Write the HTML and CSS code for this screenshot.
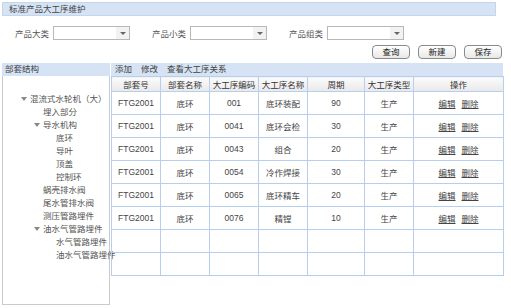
FILE: index.html
```html
<!DOCTYPE html>
<html lang="zh">
<head>
  <meta charset="UTF-8" />
  <title>标准产品大工序维护</title>
  <link rel="stylesheet" href="styles.css">
</head>
<body>
  <div class="title-bar">标准产品大工序维护</div>

  <div class="filters">
    <div class="field">
      <span class="field-label">产品大类</span>
      <div class="combo"><span class="combo-btn"><i class="caret"></i></span></div>
    </div>
    <div class="field">
      <span class="field-label">产品小类</span>
      <div class="combo"><span class="combo-btn"><i class="caret"></i></span></div>
    </div>
    <div class="field">
      <span class="field-label">产品组类</span>
      <div class="combo"><span class="combo-btn"><i class="caret"></i></span></div>
    </div>
  </div>

  <div class="actions">
    <a class="btn">查询</a>
    <a class="btn">新建</a>
    <a class="btn">保存</a>
  </div>

  <div class="main">
    <div class="tree-panel">
      <div class="panel-head">部套结构</div>
      <div class="tree-body">
        <div class="node lvl0"><i class="arrow"></i>混流式水轮机（大）</div>
        <div class="node lvl1">埋入部分</div>
        <div class="node lvl1"><i class="arrow"></i>导水机构</div>
        <div class="node lvl2">底环</div>
        <div class="node lvl2">导叶</div>
        <div class="node lvl2">顶盖</div>
        <div class="node lvl2">控制环</div>
        <div class="node lvl1">蜗壳排水阀</div>
        <div class="node lvl1">尾水管排水阀</div>
        <div class="node lvl1">测压管路埋件</div>
        <div class="node lvl1"><i class="arrow"></i>油水气管路埋件</div>
        <div class="node lvl2">水气管路埋件</div>
        <div class="node lvl2">油水气管路埋件</div>
      </div>
    </div>

    <div class="grid-panel">
      <div class="panel-head toolbar">
        <span>添加</span><span>修改</span><span>查看大工序关系</span>
      </div>
      <table class="grid">
        <colgroup>
          <col style="width:49px"><col style="width:49px"><col style="width:49px"><col style="width:49px">
          <col style="width:57px"><col style="width:49px"><col style="width:90px">
        </colgroup>
        <thead>
          <tr>
            <th>部套号</th><th>部套名称</th><th>大工序编码</th><th>大工序名称</th>
            <th>周期</th><th>大工序类型</th><th>操作</th>
          </tr>
        </thead>
        <tbody>
          <tr><td>FTG2001</td><td>底环</td><td>001</td><td>底环装配</td><td>90</td><td>生产</td><td><a>编辑</a><a>删除</a></td></tr>
          <tr><td>FTG2001</td><td>底环</td><td>0041</td><td>底环会检</td><td>30</td><td>生产</td><td><a>编辑</a><a>删除</a></td></tr>
          <tr><td>FTG2001</td><td>底环</td><td>0043</td><td>组合</td><td>20</td><td>生产</td><td><a>编辑</a><a>删除</a></td></tr>
          <tr><td>FTG2001</td><td>底环</td><td>0054</td><td>冷作焊接</td><td>30</td><td>生产</td><td><a>编辑</a><a>删除</a></td></tr>
          <tr><td>FTG2001</td><td>底环</td><td>0065</td><td>底环精车</td><td>20</td><td>生产</td><td><a>编辑</a><a>删除</a></td></tr>
          <tr><td>FTG2001</td><td>底环</td><td>0076</td><td>精镗</td><td>10</td><td>生产</td><td><a>编辑</a><a>删除</a></td></tr>
          <tr><td></td><td></td><td></td><td></td><td></td><td></td><td></td></tr>
          <tr><td></td><td></td><td></td><td></td><td></td><td></td><td></td></tr>
        </tbody>
      </table>
    </div>
  </div>
</body>
</html>
```

FILE: styles.css
```css
/* --- base --- */
body {
  margin: 0;
  background: #fff;
  color: #444;
  font-family: 'Liberation Sans', 'Noto Sans CJK SC', sans-serif;
  font-size: 8.5px;
  width: 511px;
  height: 308px;
  overflow: hidden;
}

/* --- title bar --- */
.title-bar {
  margin: 2px 0 0 2px;
  width: 486px;
  height: 12px;
  line-height: 12px;
  padding-left: 6px;
  background: #d5e3f4;
  border: 1px solid #c3d6ee;
  color: #444;
}

/* --- filters --- */
.filters {
  display: flex;
  gap: 22px;
  margin-top: 10px;
  padding-left: 15px;
  height: 14px;
}
.field {
  display: flex;
  align-items: center;
  gap: 4px;
}
.field-label {
  color: #555;
}
.combo {
  width: 75px;
  height: 12px;
  border: 1px solid #b8b8b8;
  background: #fff;
  display: flex;
  justify-content: flex-end;
}
.combo-btn {
  width: 13px;
  height: 12px;
  background: #f2f2f2;
  display: flex;
  align-items: center;
  justify-content: center;
}
.caret {
  width: 0;
  height: 0;
  border-left: 3px solid transparent;
  border-right: 3px solid transparent;
  border-top: 3px solid #666;
}

/* --- buttons --- */
.actions {
  display: flex;
  justify-content: flex-end;
  gap: 8px;
  margin-top: 5px;
  padding-right: 9px;
  height: 14px;
}
.btn {
  width: 36px;
  height: 12px;
  line-height: 12px;
  text-align: center;
  border: 1px solid #8a8a8a;
  border-radius: 4px;
  background: linear-gradient(#ffffff, #e8e8e8);
  color: #222;
  cursor: pointer;
}

/* --- main area --- */
.main {
  display: flex;
  margin-top: 4px;
  padding-left: 2px;
}
.panel-head {
  height: 13px;
  line-height: 13px;
  background: #d5e3f4;
  padding-left: 3px;
  color: #444;
}

.tree-panel {
  width: 108px;
}
.tree-body {
  height: 211px;
  padding-top: 17px;
  border: 1px solid #cacaca;
  border-top: none;
}
.node {
  height: 13px;
  line-height: 13px;
  white-space: nowrap;
  color: #555;
}
.node.lvl0 { padding-left: 27px; }
.node.lvl1 { padding-left: 40px; }
.node.lvl2 { padding-left: 53px; }
.arrow {
  display: inline-block;
  width: 0;
  height: 0;
  margin-left: -9px;
  margin-right: 3px;
  vertical-align: 1px;
  border-left: 3px solid transparent;
  border-right: 3px solid transparent;
  border-top: 4px solid #888;
}

/* --- grid --- */
.grid-panel {
  width: 392px;
  margin-left: 1px;
}
.toolbar {
  padding-left: 4px;
}
.toolbar span {
  margin-right: 9px;
}
.grid {
  width: 392px;
  border-collapse: collapse;
  table-layout: fixed;
}
.grid th, .grid td {
  border: 1px solid #b6cfee;
  text-align: center;
  padding: 0;
  white-space: nowrap;
  overflow: hidden;
}
.grid th {
  height: 14px;
  font-weight: normal;
  color: #333;
  background: linear-gradient(#fbfbfb, #e9e9e9);
}
.grid td {
  height: 22px;
  color: #444;
}
.grid td a {
  color: #444;
  text-decoration: underline;
  margin: 0 3px;
  cursor: pointer;
}
```
